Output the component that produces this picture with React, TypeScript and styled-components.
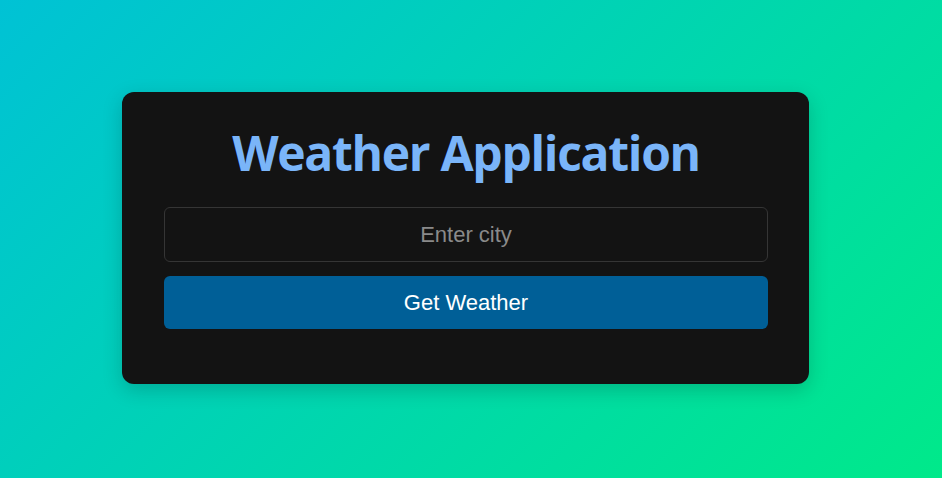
import React from "react";
import styled, { createGlobalStyle } from "styled-components";

const GlobalStyle = createGlobalStyle`
  html, body { margin: 0; padding: 0; }
  body { font-family: "Liberation Sans", Arial, sans-serif; }
`;

const Page = styled.div`
  width: 100vw;
  height: 100vh;
  box-sizing: border-box;
  padding: 0 11px 2px 0;
  display: flex;
  align-items: center;
  justify-content: center;
  background: linear-gradient(135deg, #00c2d5 0%, #00e98a 100%);
`;

const Card = styled.div`
  width: 687px;
  box-sizing: border-box;
  padding: 28px 41px 55px 42px;
  background: #131313;
  border-radius: 12px;
  box-shadow: 0 6px 20px rgba(0, 0, 0, 0.18);
  display: flex;
  flex-direction: column;
  align-items: stretch;
`;

const Title = styled.h1`
  margin: 0 0 21px;
  text-align: center;
  font-family: "Open Sans", sans-serif;
  font-weight: 700;
  font-size: 48px;
  letter-spacing: -1.3px;
  line-height: 66px;
  color: #7ab5f9;
`;

const Input = styled.input`
  height: 55px;
  box-sizing: border-box;
  border: 1px solid #353535;
  border-radius: 6px;
  background: #131313;
  color: #fff;
  text-align: center;
  font-family: "Liberation Sans", Arial, sans-serif;
  font-size: 22px;
  outline: none;
  &::placeholder { color: #8a8a8a; }
`;

const Button = styled.button`
  margin-top: 14px;
  height: 53px;
  border: none;
  border-radius: 6px;
  background: #005f97;
  color: #fff;
  font-family: "Liberation Sans", Arial, sans-serif;
  font-size: 22px;
  cursor: pointer;
`;

export default function App() {
  return (
    <>
      <GlobalStyle />
      <Page>
        <Card>
          <Title>Weather Application</Title>
          <Input placeholder="Enter city" />
          <Button>Get Weather</Button>
        </Card>
      </Page>
    </>
  );
}
